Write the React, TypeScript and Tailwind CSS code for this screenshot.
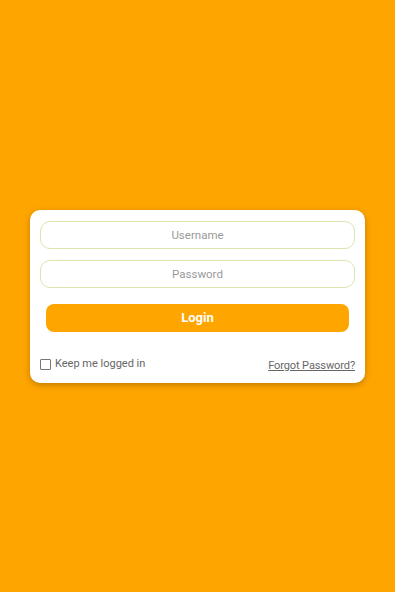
import React from "react";

export default function App() {
  return (
    <div
      className="w-[395px] h-[592px] bg-[#ffa500] flex items-center justify-center"
      style={{ fontFamily: "Roboto, 'Noto Sans', sans-serif" }}
    >
      <div className="w-[335px] h-[173px] bg-white rounded-[10px] shadow-[0_2px_6px_rgba(0,0,0,0.25)] px-[10px] pt-[11px] flex flex-col">
        <div className="h-[28px] pt-[2px] rounded-[10px] border border-[#dfe3b0] flex items-center justify-center text-[11.5px] text-[#9a9a9a]">
          Username
        </div>
        <div className="h-[28px] pt-[2px] mt-[11px] rounded-[10px] border border-[#dfe3b0] flex items-center justify-center text-[11.5px] text-[#9a9a9a]">
          Password
        </div>
        <div className="mx-[6px] mt-[16px] h-[28px] rounded-[8px] bg-[#ffa500] flex items-center justify-center text-[13px] font-bold text-white">
          Login
        </div>
        <div className="mt-[23px] flex items-center justify-between">
          <div className="flex items-center gap-[4px] text-[11px] text-[#666]">
            <span className="w-[11px] h-[11px] border border-[#777] rounded-[1px] inline-block" />
            <span>Keep me logged in</span>
          </div>
          <span className="text-[11px] text-[#666] underline mt-[3px] tracking-[-0.1px]">Forgot Password?</span>
        </div>
      </div>
    </div>
  );
}
